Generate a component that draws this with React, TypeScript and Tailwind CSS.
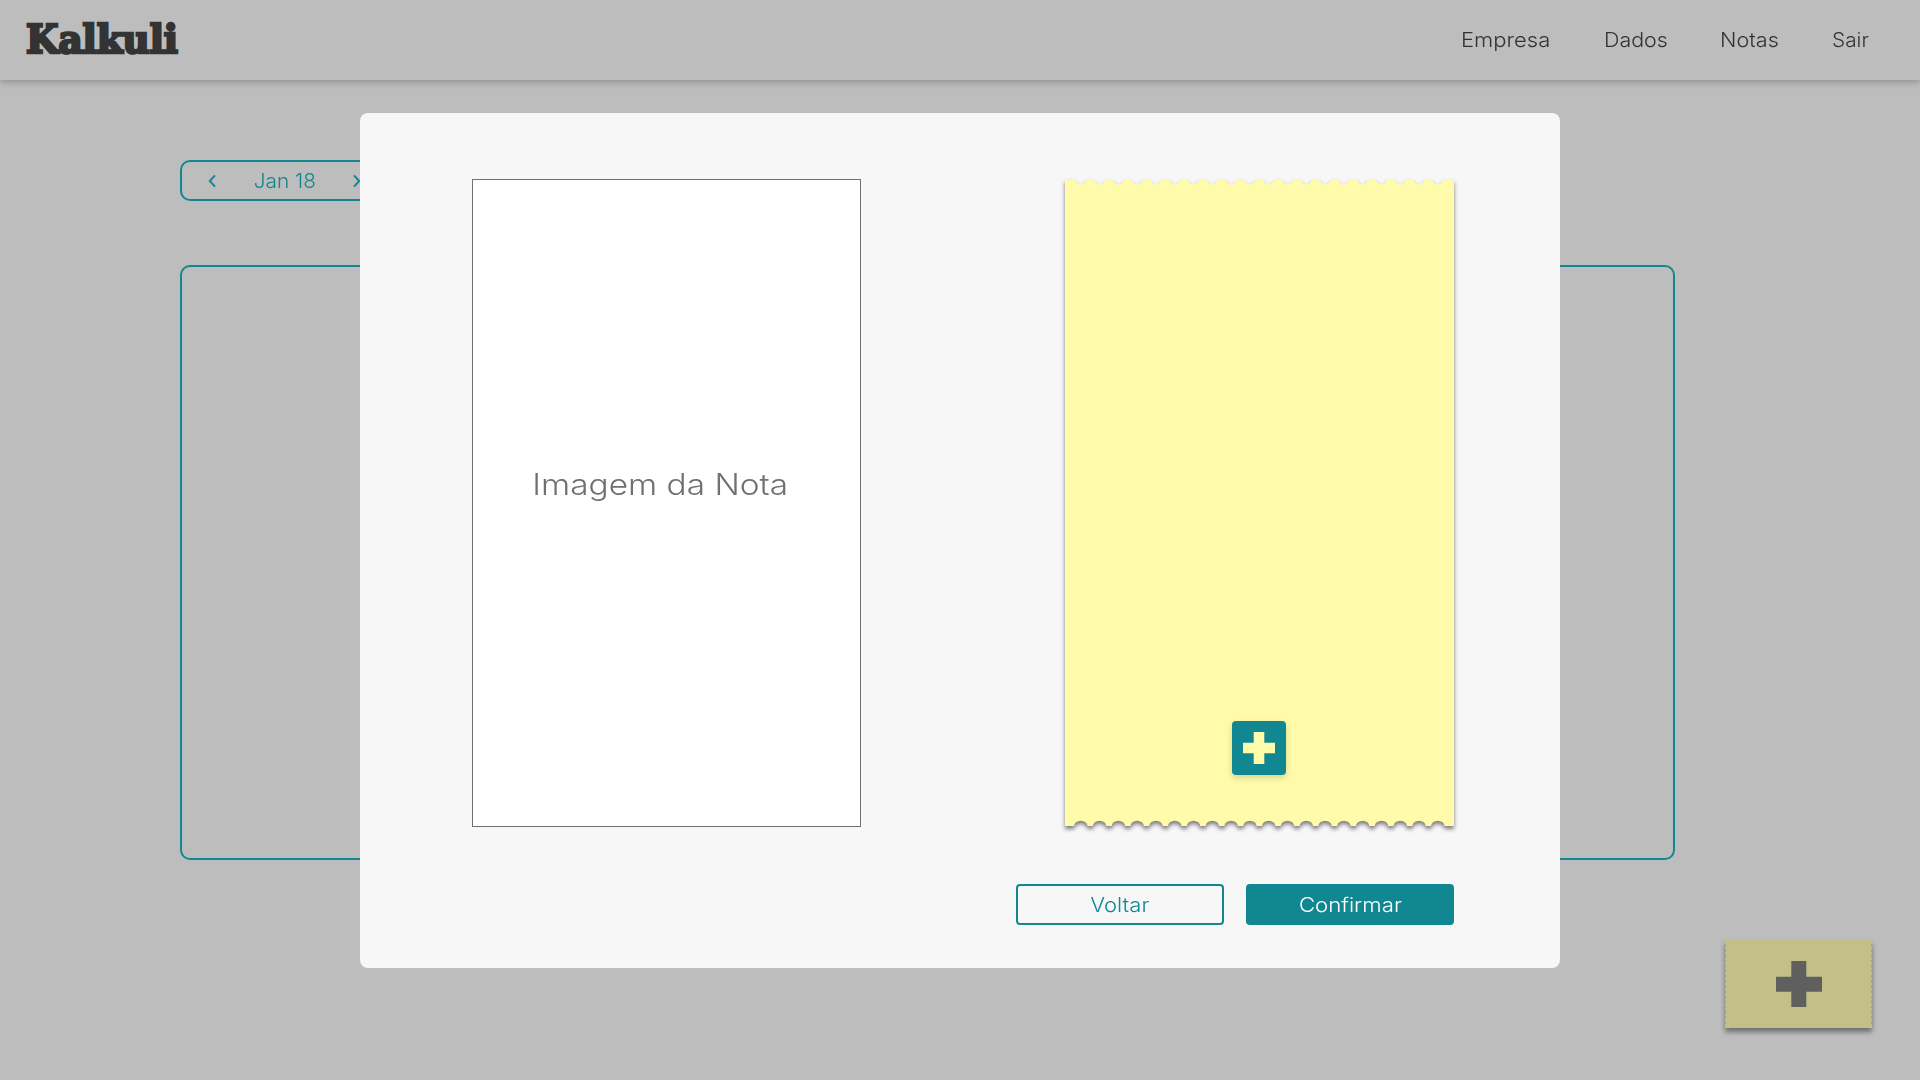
import React from "react";

const PITCH = 18.79;
const NOTCHES = Array.from({ length: 20 }, (_, i) => 15.8 + i * PITCH);

function receiptPath() {
  const w = 389;
  const h = 647;
  let d = "M0 0.5";
  for (const c of NOTCHES) {
    d += ` H${c - 7} C${c - 4.6} 1 ${c - 4.6} 5.5 ${c} 5.5 C${c + 4.6} 5.5 ${c + 4.6} 1 ${c + 7} 0.5`;
  }
  d += ` H${w} V${h}`;
  for (const c of [...NOTCHES].reverse()) {
    d += ` H${c + 6.7} A6.7 5.2 0 0 0 ${c - 6.7} ${h}`;
  }
  return d + " H0 Z";
}

function Logo() {
  return (
    <svg width="160" height="60" viewBox="0 0 160 60" className="block overflow-visible">
      <text
        x="2"
        y="42.5"
        textLength="152"
        lengthAdjust="spacingAndGlyphs"
        fontFamily="'DejaVu Serif', serif"
        fontWeight="700"
        fontSize="38.5"
        fill="#333333"
        stroke="#333333"
        strokeWidth="2.6"
      >
        Kalkuli
      </text>
    </svg>
  );
}

function Chevron({ flip = false }: { flip?: boolean }) {
  return (
    <svg width="8" height="14" viewBox="0 0 8 14" fill="none" stroke="#118891" strokeWidth="2" className={flip ? "-scale-x-100" : ""}>
      <path d="M7 1.4 L1.8 7 L7 12.6" />
    </svg>
  );
}

function Header() {
  return (
    <header className="flex h-20 items-center justify-between pl-[24px] pr-[47px] shadow-[0_2px_7px_rgba(0,0,0,0.25)]">
      <Logo />
      <nav className="flex whitespace-nowrap text-[20px] font-light leading-6 text-[#333333]">
        <a className="w-[143px] origin-left scale-x-[1.1]">Empresa</a>
        <a className="w-[116px] origin-left scale-x-[1.07]">Dados</a>
        <a className="w-[112px] origin-left scale-x-[1.08]">Notas</a>
        <a className="w-[41px] origin-left scale-x-[1.04]">Sair</a>
      </nav>
    </header>
  );
}

function AddReceipt() {
  return (
    <button className="absolute left-[1725px] top-[940px] flex h-[88px] w-[147px] items-center justify-center bg-[#c2c088] pl-px shadow-[0_4px_5px_rgba(0,0,0,0.42)]">
      <span className="absolute inset-y-1 left-0 border-l border-dashed border-[#a5a58c]" />
      <span className="absolute inset-y-1 right-0 border-l border-dashed border-[#a5a58c]" />
      <svg width="46" height="46" viewBox="0 0 46 46" fill="#5f5f5f" className="mb-px">
        <path d="M15.3 0H30.3V15.7H46V30.7H30.3V46H15.3V30.7H0V15.7H15.3Z" />
      </svg>
    </button>
  );
}

function Receipt() {
  return (
    <div className="relative h-[648px] w-[389px]">
      <svg width="389" height="648" viewBox="0 0 389 648" className="block overflow-visible drop-shadow-[0_3px_2px_rgba(0,0,0,0.5)]">
        <path d={receiptPath()} fill="#fffbab" />
      </svg>
      <button className="absolute left-[167px] top-[542px] flex h-[54px] w-[54px] items-center justify-center rounded bg-[#118891] pb-px shadow-[0_3px_6px_rgba(0,0,0,0.16)]">
        <svg width="32" height="32" viewBox="0 0 32 32" fill="#fffbab">
          <path d="M10.7 0H21.3V10.7H32V21.3H21.3V32H10.7V21.3H0V10.7H10.7Z" />
        </svg>
      </button>
    </div>
  );
}

function Modal() {
  return (
    <section className="absolute left-[360px] top-[113px] flex h-[855px] w-[1200px] flex-col rounded-lg bg-[#f7f7f7] pl-[112px] pr-[106px] pt-[66px]">
      <div className="flex justify-between">
        <div className="flex h-[648px] w-[389px] justify-center border border-[#707070] bg-white pr-[13px] pt-[285px] text-[29.3px] font-light leading-[40px] text-[#707070]">
          <span className="scale-x-[1.14] whitespace-nowrap">Imagem da Nota</span>
        </div>
        <Receipt />
      </div>
      <div className="mt-[57px] flex justify-end gap-[22px] text-[20px] font-light">
        <button className="flex h-[41px] w-[208px] items-center justify-center rounded border-2 border-[#118891] text-[#118891]">
          <span className="scale-x-[1.1]">Voltar</span>
        </button>
        <button className="flex h-[41px] w-[208px] items-center justify-center rounded bg-[#118891] text-white">
          <span className="scale-x-[1.11]">Confirmar</span>
        </button>
      </div>
    </section>
  );
}

export default function App() {
  return (
    <div className="relative h-[1080px] w-full overflow-hidden bg-[#bdbdbd] font-['Inter',sans-serif]">
      <Header />
      <main className="pl-[180px] pt-20">
        <div className="flex h-[41px] w-[209px] items-center justify-between rounded-[10px] border-2 border-[#118891] px-[26px] text-[20px] font-light text-[#118891]">
          <Chevron />
          <span className="scale-x-[1.04]">Jan 18</span>
          <Chevron flip />
        </div>
        <div className="mt-16 h-[595px] w-[1495px] rounded-[10px] border-2 border-[#118891]" />
      </main>
      <AddReceipt />
      <Modal />
    </div>
  );
}
